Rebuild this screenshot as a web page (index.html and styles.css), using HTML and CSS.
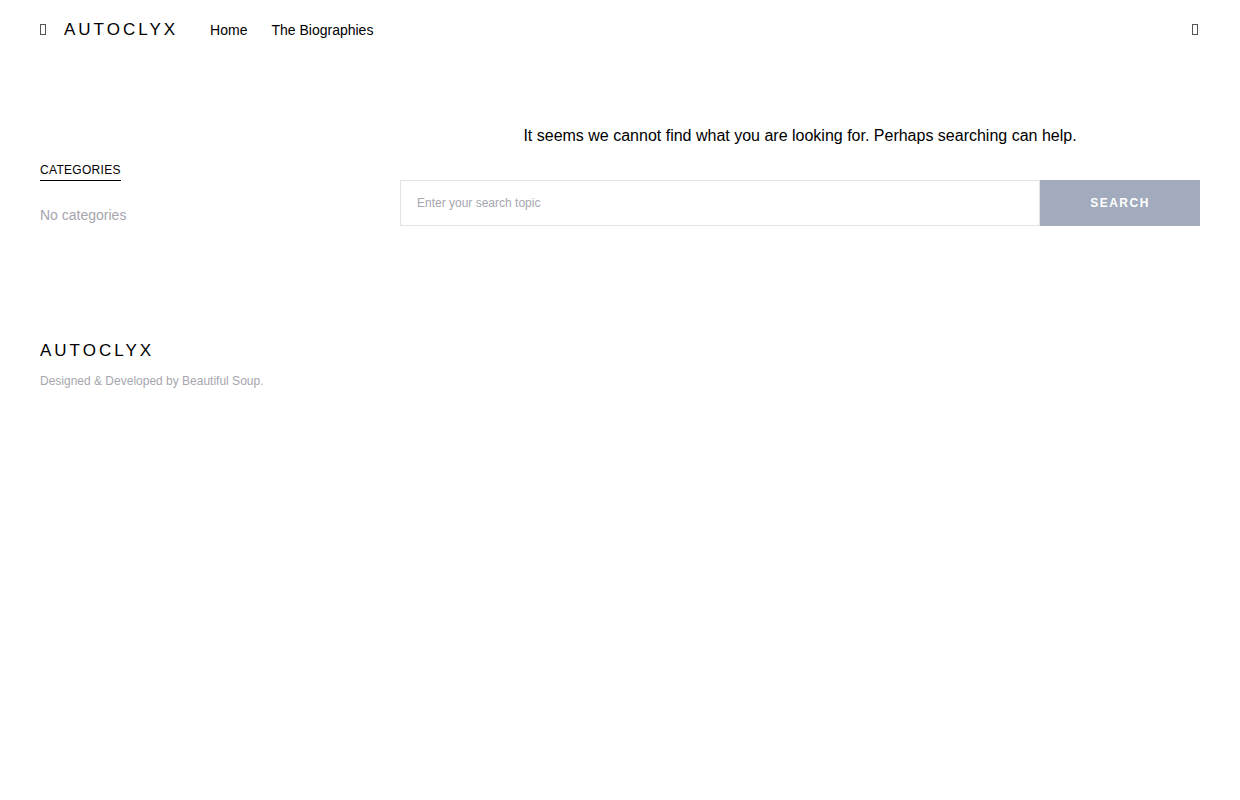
FILE: index.html
```html
<!DOCTYPE html>
<html lang="en">
<head>
    <meta charset="UTF-8">
    <meta name="viewport" content="width=device-width, initial-scale=1.0">
    <title>Autoclyx</title>
    <link rel="stylesheet" href="styles.css">
</head>
<body>

<header class="navbar">
    <button class="icon-button" type="button" aria-label="Menu">
        <svg width="6" height="12" viewBox="0 0 6 12"><rect x="0.5" y="0.5" width="5" height="10"/></svg>
    </button>
    <a class="logo" href="#">AUTOCLYX</a>
    <nav class="nav-links">
        <a href="#">Home</a>
        <a href="#">The Biographies</a>
    </nav>
    <button class="icon-button search-toggle" type="button" aria-label="Search">
        <svg width="6" height="12" viewBox="0 0 6 12"><rect x="0.5" y="0.5" width="5" height="10"/></svg>
    </button>
</header>

<div class="site-content">
    <aside class="sidebar">
        <h5 class="widget-title">CATEGORIES</h5>
        <p class="widget-text">No categories</p>
    </aside>

    <main class="content">
        <p class="message">It seems we cannot find what you are looking for. Perhaps searching can help.</p>
        <form class="search-form" role="search">
            <input type="search" aria-label="Search topic" placeholder="Enter your search topic">
            <button type="submit">SEARCH</button>
        </form>
    </main>
</div>

<footer class="footer">
    <a class="logo" href="#">AUTOCLYX</a>
    <p class="copyright">Designed &amp; Developed by Beautiful Soup.</p>
</footer>

</body>
</html>
```
FILE: styles.css
```css
* {
    box-sizing: border-box;
}

body {
    margin: 0;
    font-family: "Liberation Sans", Arial, sans-serif;
    font-size: 16px;
    line-height: 24px;
    color: #000;
    background-color: #fff;
}

a {
    color: inherit;
    text-decoration: none;
}

p, h5 {
    margin: 0;
}

.navbar {
    display: flex;
    align-items: center;
    height: 60px;
    padding: 0 40px;
}

.icon-button {
    display: flex;
    padding: 0;
    border: 0;
    background: none;
    cursor: pointer;
}

.icon-button svg {
    fill: none;
    stroke: #555;
    stroke-width: 1;
}

.navbar .logo {
    margin-left: 18px;
}

.logo {
    font-size: 17px;
    letter-spacing: 3px;
}

.nav-links {
    display: flex;
    gap: 24px;
    margin-left: 32px;
    font-size: 14px;
    line-height: 21px;
}

.search-toggle {
    margin-left: auto;
    margin-right: 2px;
}

.site-content {
    display: grid;
    grid-template-columns: 280px 1fr;
    gap: 80px;
    padding: 64px 40px 113px;
}

.sidebar {
    padding-top: 36px;
}

.widget-title {
    width: fit-content;
    margin-bottom: 24px;
    border-bottom: 1px solid #000;
    font-size: 12px;
    font-weight: normal;
    line-height: 20px;
    letter-spacing: 0.025em;
}

.widget-text {
    font-size: 14px;
    line-height: 20px;
    color: #a6a6ae;
}

.message {
    margin-bottom: 32px;
    text-align: center;
}

.search-form {
    display: flex;
}

.search-form input {
    flex: 1;
    min-width: 0;
    height: 46px;
    padding: 0 16px;
    border: 1px solid #e2e2e4;
    border-radius: 0;
    font-family: inherit;
    font-size: 12px;
    appearance: none;
}

.search-form input::placeholder {
    color: #a6a6ae;
}

.search-form button {
    width: 160px;
    border: 0;
    background-color: #a2abbd;
    color: #fff;
    font-family: inherit;
    font-size: 12px;
    font-weight: bold;
    letter-spacing: 0.125em;
    cursor: pointer;
}

.footer {
    padding: 0 40px 40px;
}

.copyright {
    margin-top: 8px;
    font-size: 12px;
    line-height: 20px;
    color: #a6a6ae;
}
```
